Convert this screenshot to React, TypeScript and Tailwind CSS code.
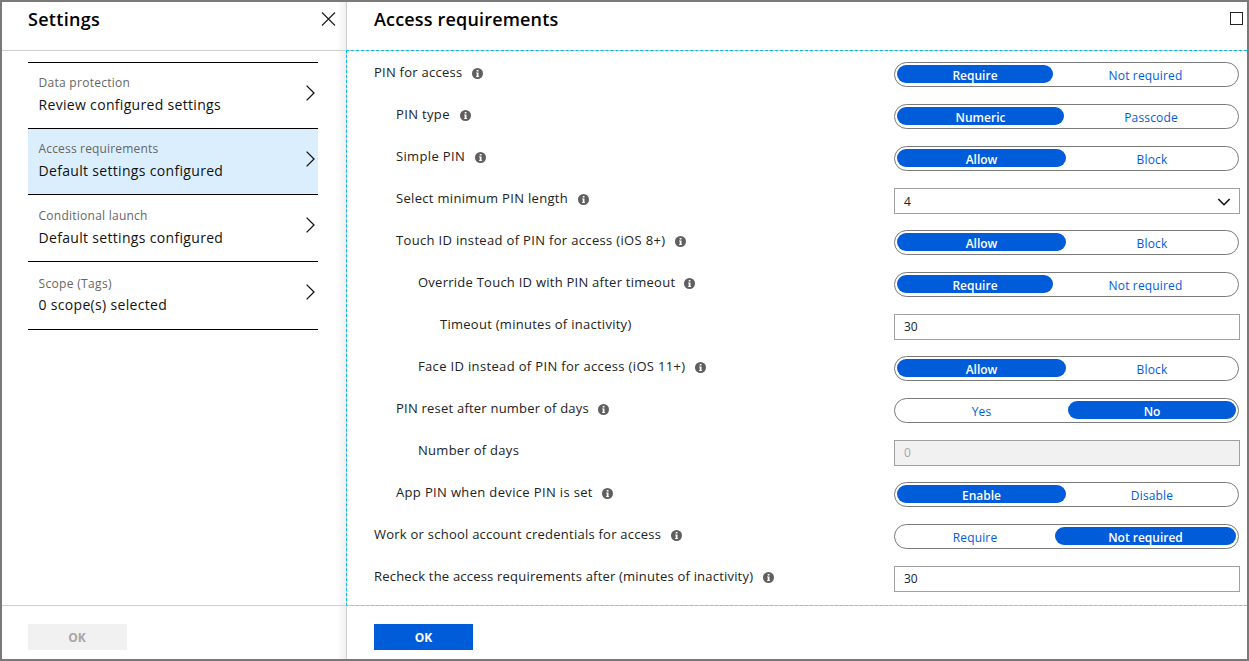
import React from "react";

type Toggle = { kind: "toggle"; options: [string, string]; active: 0 | 1; first: string };
type Field = { kind: "field" | "select" | "disabled"; value: string };
type Row = { label: string; indent: string; width: string; info: boolean; control: Toggle | Field };

const rows: Row[] = [
  { label: "PIN for access", indent: "pl-0", width: "w-[98px] tracking-[.25px]", info: true, control: { kind: "toggle", options: ["Require", "Not required"], active: 0, first: "w-[156px]" } },
  { label: "PIN type", indent: "pl-[22px]", width: "w-[64px] tracking-[.35px]", info: true, control: { kind: "toggle", options: ["Numeric", "Passcode"], active: 0, first: "w-[167px]" } },
  { label: "Simple PIN", indent: "pl-[22px]", width: "w-[79px] tracking-[.35px]", info: true, control: { kind: "toggle", options: ["Allow", "Block"], active: 0, first: "w-[169px]" } },
  { label: "Select minimum PIN length", indent: "pl-[22px]", width: "w-[182px] tracking-[.32px]", info: true, control: { kind: "select", value: "4" } },
  { label: "Touch ID instead of PIN for access (iOS 8+)", indent: "pl-[22px]", width: "w-[279px] tracking-[.33px]", info: true, control: { kind: "toggle", options: ["Allow", "Block"], active: 0, first: "w-[169px]" } },
  { label: "Override Touch ID with PIN after timeout", indent: "pl-[44px]", width: "w-[266px] tracking-[.25px]", info: true, control: { kind: "toggle", options: ["Require", "Not required"], active: 0, first: "w-[156px]" } },
  { label: "Timeout (minutes of inactivity)", indent: "pl-[66px]", width: "w-[200px] tracking-[.27px]", info: false, control: { kind: "field", value: "30" } },
  { label: "Face ID instead of PIN for access (iOS 11+)", indent: "pl-[44px]", width: "w-[277px] tracking-[.34px]", info: true, control: { kind: "toggle", options: ["Allow", "Block"], active: 0, first: "w-[169px]" } },
  { label: "PIN reset after number of days", indent: "pl-[22px]", width: "w-[202px] tracking-[.22px]", info: true, control: { kind: "toggle", options: ["Yes", "No"], active: 1, first: "w-[169px]" } },
  { label: "Number of days", indent: "pl-[44px]", width: "w-[110px] tracking-[.28px]", info: false, control: { kind: "disabled", value: "0" } },
  { label: "App PIN when device PIN is set", indent: "pl-[22px]", width: "w-[206px] tracking-[.35px]", info: true, control: { kind: "toggle", options: ["Enable", "Disable"], active: 0, first: "w-[169px]" } },
  { label: "Work or school account credentials for access", indent: "pl-0", width: "w-[297px] tracking-[.24px]", info: true, control: { kind: "toggle", options: ["Require", "Not required"], active: 1, first: "w-[156px]" } },
  { label: "Recheck the access requirements after (minutes of inactivity)", indent: "pl-0", width: "w-[389px] tracking-[.2px]", info: true, control: { kind: "field", value: "30" } },
];

const sections = [
  { title: "Data protection", detail: "Review configured settings", box: "h-[66px]", text: "pt-[10px]", gap: "mt-[2px]", tracking: "tracking-[.28px]" },
  { title: "Access requirements", detail: "Default settings configured", selected: true, box: "h-[66px]", text: "pt-[10px]", gap: "mt-[2px]", tracking: "tracking-[.17px]" },
  { title: "Conditional launch", detail: "Default settings configured", box: "h-[67px]", text: "pt-[11px]", gap: "mt-[2px]", tracking: "tracking-[.25px]" },
  { title: "Scope (Tags)", detail: "0 scope(s) selected", box: "h-[68px]", text: "pt-[12px]", gap: "mt-[1px]", tracking: "tracking-[.33px]" },
];

function InfoIcon() {
  return (
    <svg className="mt-[6px] h-[11px] w-[11px] shrink-0" viewBox="0 0 11 11">
      <circle cx="5.5" cy="5.5" r="5.5" fill="#5f5f5f" />
      <path d="M4.7 1.9h1.8v1.5H4.7zM4 4.4h2.5v3.8h.6v.9H4v-.9h.7V5.2H4z" fill="#fff" />
    </svg>
  );
}

function ToggleControl({ control }: { control: Toggle }) {
  return (
    <div className="flex h-[25px] w-[345px] rounded-full border border-[#7a7a7a] px-[2px] pt-[2px]">
      {control.options.map((option, i) => (
        <div
          key={option}
          className={`flex h-[18px] justify-center rounded-full pt-[2px] text-[12px] leading-[18px] ${i === 0 ? control.first : "ml-[2px] flex-1"} ${
            i === control.active ? "bg-[#015cda] font-semibold text-white" : "tracking-[.15px] text-[#015cda]"
          }`}
        >
          {option}
        </div>
      ))}
    </div>
  );
}

function FieldControl({ control }: { control: Field }) {
  return (
    <div
      className={`flex h-[26px] w-[346px] justify-between border border-[#a0a0a0] pl-[9px] pr-[8px] text-[12px] leading-[24px] ${
        control.kind === "disabled" ? "bg-[#f1f1f1] text-[#a6a6a6]" : "bg-white text-[#222]"
      }`}
    >
      <span className={control.kind === "select" ? "pt-px" : ""}>{control.value}</span>
      {control.kind === "select" && (
        <svg className="mt-[9px] h-[8px] w-[14px]" viewBox="0 0 14 8" fill="none" stroke="#111" strokeWidth="1.6">
          <path d="M1.3 1l5.7 5.7L12.7 1" />
        </svg>
      )}
    </div>
  );
}

export default function App() {
  return (
    <div className="flex h-[661px] w-[1249px] overflow-hidden border-2 border-[#7a7878] bg-white font-['Open_Sans','Noto_Sans',sans-serif] text-black">
      <div className="flex w-[344px] shrink-0 flex-col bg-[linear-gradient(to_left,#f0f0f0,#fff_9px)]">
        <header className="flex h-[49px] justify-between border-b border-[#cfcfcf] pl-[26px] pr-[10px]">
          <h1 className="pt-[5px] text-[18px] font-semibold leading-[24px] tracking-[.3px]">Settings</h1>
          <svg className="mt-[10px] h-[14px] w-[15px]" viewBox="0 0 15 14" fill="none" stroke="#222" strokeWidth="1.2">
            <path d="M1 .5l13 13M14 .5l-13 13" />
          </svg>
        </header>
        <nav className="ml-[26px] mt-[11px] w-[290px] flex-1">
          <div className="border-t border-black">
            {sections.map((s) => (
              <div key={s.title} className={`flex items-start justify-between border-b border-black pl-[10.5px] pr-[3px] ${s.box} ${s.selected ? "bg-[#dbeefe]" : ""}`}>
                <div className={s.text}>
                  <div className={`whitespace-nowrap text-[12px] leading-[20px] text-[#666] ${s.tracking}`}>{s.title}</div>
                  <div className={`whitespace-nowrap text-[14px] leading-[20px] tracking-[.32px] text-[#111] ${s.gap}`}>{s.detail}</div>
                </div>
                <svg className="mt-[22px] h-[16px] w-[9px]" viewBox="0 0 9 16" fill="none" stroke="#111" strokeWidth="1.3">
                  <path d="M.6 .6L8 8 .6 15.4" />
                </svg>
              </div>
            ))}
          </div>
        </nav>
        <footer className="h-[54px] border-t border-[#cfcfcf] pl-[26px] pt-[18px]">
          <button className="flex h-[26px] w-[99px] items-center justify-center bg-[#f1f1f1] pr-px pt-px text-[12px] font-bold text-[#a6a6a6]">OK</button>
        </footer>
      </div>

      <div className="flex min-w-0 flex-1 flex-col">
        <header className="flex h-[48px] justify-between border-l border-[#cfcfcf] pl-[27px] pr-[4px]">
          <h2 className="pt-[5px] text-[18px] font-semibold leading-[24px] tracking-[.17px]">Access requirements</h2>
          <div className="mt-[10px] h-[13px] w-[13px] border border-[#222]" />
        </header>
        <main className="h-[556px] border border-r-0 border-dashed border-[#00bcf2] border-b-[#8cc4d4] [background:linear-gradient(#fff,#fff)_padding-box,linear-gradient(#cfcfcf,#cfcfcf)_border-box] pl-[27px] pt-[11px]">
          {rows.map((row) => (
            <div key={row.label} className="flex h-[42px] items-start">
              <div className={`flex w-[520px] shrink-0 ${row.indent}`}>
                <span className={`shrink-0 whitespace-nowrap text-[13px] leading-[20px] text-[#222] ${row.width}`}>{row.label}</span>
                {row.info && <InfoIcon />}
              </div>
              {row.control.kind === "toggle" ? <ToggleControl control={row.control} /> : <FieldControl control={row.control} />}
            </div>
          ))}
        </main>
        <footer className="flex-1 border-l border-[#cfcfcf] pl-[27px] pt-[18px]">
          <button className="flex h-[26px] w-[99px] items-center justify-center bg-[#015cda] pt-px text-[12px] font-bold text-white">OK</button>
        </footer>
      </div>
    </div>
  );
}
